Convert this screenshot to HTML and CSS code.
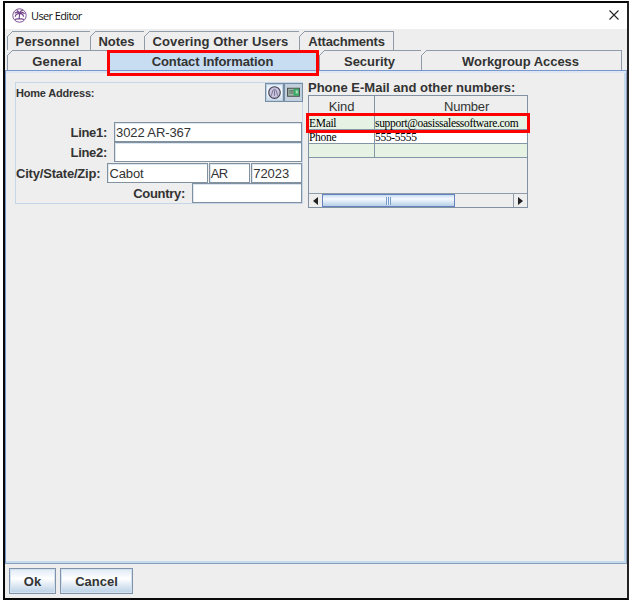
FILE: index.html
```
<!DOCTYPE html>
<html lang="en">
<head>
<meta charset="utf-8">
<title>User Editor</title>
<link rel="stylesheet" href="styles.css">
</head>
<body>
<main class="window">
  <header class="titlebar">
    <svg class="logo" width="15" height="15" viewBox="0 0 15 15" fill="none" stroke="#71418a">
      <circle cx="7.5" cy="7.5" r="6.7" stroke-width=".9"/>
      <path d="M7.6 5.8C5.5 3.2 3.8 4 2.8 5.4M7.6 5.8C5 5.2 3.5 6.7 3.3 8.6M7.6 5.8C6.6 3.8 6 2.7 4.8 2.3M7.6 5.8C8 3.5 9.2 2.4 10.8 2.8M7.6 5.8C10 3.8 11.8 4.5 12.5 6M7.6 5.8C10.5 5.5 11.4 7 11.5 8.8" stroke-width="1.2"/>
      <path d="M7.6 6L7.1 11.5M3 11.5Q7.3 9.8 12 11.5" stroke-width="1.1"/>
    </svg>
    <h1 class="title">User Editor</h1>
    <svg class="close" width="10" height="10" viewBox="0 0 10 10" stroke="#222" stroke-width="1.1"><path d="M.5 .5L9.5 9.5M9.5 .5L.5 9.5"/></svg>
  </header>
  <nav class="tabs">
    <div class="tab-row">
      <div class="tab personnel"><span>Personnel</span></div>
      <div class="tab notes"><span>Notes</span></div>
      <div class="tab covering"><span>Covering Other Users</span></div>
      <div class="tab attachments"><span>Attachments</span></div>
    </div>
    <div class="tab-row">
      <div class="tab general"><span>General</span></div>
      <div class="tab contact"><span>Contact Information</span><i class="mark tab-mark"></i></div>
      <div class="tab security"><span>Security</span></div>
      <div class="tab workgroup"><span>Workgroup Access</span></div>
    </div>
  </nav>
  <section class="panel">
    <div class="address">
      <div class="address-head">
        <span class="address-title">Home Address:</span>
        <div class="tools">
          <div class="tool"><svg width="15" height="15" viewBox="0 0 14 14"><circle cx="7" cy="7" r="5.4" fill="#c8c3df" stroke="#454554" stroke-width="1.1"/><path d="M4 10L5.5 5Q7 3 8.5 5L10 10M7 5V10" fill="none" stroke="#77718e" stroke-width=".9"/></svg></div>
          <div class="tool dim"><svg width="15" height="15" viewBox="0 0 14 14"><path d="M1.5 3H12.5V10.5H1.5Z" fill="#a3b9a9" stroke="#454c4a"/><path d="M7 3.5H12V10H7Z" fill="#35a864"/><path d="M3 5.5H7M3 7.5H7" stroke="#53665d"/><path d="M9 5H11V8H9Z" fill="#a9dfb9"/></svg></div>
        </div>
      </div>
      <div class="field-row"><label><span class="l-line">Line1:</span></label><div class="input line">3022 AR-367</div></div>
      <div class="field-row"><label><span class="l-line">Line2:</span></label><div class="input line"></div></div>
      <div class="field-row"><label><span class="l-city">City/State/Zip:</span></label><div class="input city">Cabot</div><div class="input state">AR</div><div class="input zip">72023</div></div>
      <div class="field-row"><label><span class="l-line">Country:</span></label><div class="input country"></div></div>
    </div>
    <div class="numbers">
      <h2><span>Phone E-Mail and other numbers:</span></h2>
      <div class="table">
        <div class="row head"><div>Kind</div><div>Number</div></div>
        <div class="row tint"><div>EMail</div><div>support@oasissalessoftware.com</div></div>
        <div class="row white"><div>Phone</div><div>555-5555</div></div>
        <div class="row tint"><div></div><div></div></div>
        <div class="blank"></div>
        <div class="scroll">
          <div class="arrow"><svg width="5" height="8" viewBox="0 0 5 8"><path d="M5 0V8L0 4Z" fill="#222"/></svg></div>
          <div class="thumb"><i></i></div>
          <div class="track"></div>
          <div class="arrow right"><svg width="5" height="8" viewBox="0 0 5 8"><path d="M0 0V8L5 4Z" fill="#222"/></svg></div>
        </div>
        <i class="mark row-mark"></i>
      </div>
    </div>
  </section>
  <footer class="actions"><div class="button ok">Ok</div><div class="button cancel">Cancel</div></footer>
</main>
</body>
</html>
```
FILE: styles.css
```
* { box-sizing: border-box; }
body { margin: 0; padding: 1px 0 0 3px; background: #fff; font-family: "Liberation Sans", Arial, sans-serif; color: #333; overflow: hidden; }
.window { width: 626px; height: 599px; border: 2px solid #080808; border-right-color: #222; background: #eee; display: flex; flex-direction: column; }
.titlebar { height: 26px; background: #fff; display: flex; align-items: center; padding: 0 8px 0 7px; }
.logo { margin-top: -1px; }
.title { flex: 1; margin: -1px 0 0 4px; font: 11px "Open Sans", sans-serif; letter-spacing: -.62px; color: #111; }
.close { margin-top: -2px; }
.tabs { padding: 2px 0 0 2px; height: 41px; }
.tab-row { display: flex; height: 19px; }
.tab-row + .tab-row { height: 20px; }
.tab { position: relative; height: 100%; background: #eee; border: solid #8f9ba7; border-width: 1px 0 0 1px; display: flex; align-items: center; justify-content: center; font-size: 13px; font-weight: bold; line-height: 16px; white-space: nowrap; }
.tab span { padding-top: 2px; }
.tab::before { content: ""; position: absolute; left: -1px; top: -1px; width: 6px; height: 6px; background: linear-gradient(135deg, #eee 44%, #8f9ba7 45% 56%, transparent 57%); }
.personnel { width: 83px; padding-right: 3px; letter-spacing: .1px; }
.notes { width: 54px; padding-right: 2px; }
.covering { width: 155px; padding-right: 3px; letter-spacing: .07px; }
.attachments { width: 95px; border-right-width: 1px; letter-spacing: -.2px; }
.general { width: 101px; letter-spacing: .15px; padding-right: 2px; }
.contact { width: 211px; background: #c8ddf2; border-color: #c8ddf2; z-index: 2; letter-spacing: -.1px; padding-right: 3px; }
.contact::before { display: none; }
.security { width: 102px; letter-spacing: -.05px; padding-right: 2px; }
.workgroup { width: 201px; border-right-width: 1px; letter-spacing: -.05px; padding-right: 2px; }
.mark { position: absolute; border: 3px solid #f00; z-index: 3; }
.tab-mark { left: -2px; top: -1px; width: 212px; height: 26px; }
.panel { height: 494px; border: 1px solid #7897cf; border-bottom-color: #8b9fb8; border-right-color: #8ea3bd; box-shadow: inset 0 2px #dce7f3, inset -2px -2px #c4daef; padding: 11px 0 0 9px; display: flex; align-items: flex-start; gap: 5px; }
.address { width: 288px; height: 122px; border: 1px solid #c5d6e8; }
.address-head { height: 39px; display: flex; justify-content: space-between; margin-right: -1px; }
.address-title { font-size: 11px; line-height: 20px; font-weight: bold; letter-spacing: -.2px; }
.tools { display: flex; height: 19px; }
.tool { width: 19px; height: 19px; border: 1px solid #7a8da0; background: linear-gradient(#dce9f5, #fff 50%, #c2d6e9); box-shadow: inset 0 0 0 1px #b8cfe4; padding: 1px; }
.tool svg { display: block; }
.dim { background: #c5d0db; }
.field-row { display: flex; justify-content: flex-end; height: 20.3px; gap: 1px; }
label { flex: 1; text-align: right; font-size: 13px; font-weight: bold; line-height: 21px; white-space: nowrap; margin-right: 6px; }
.input { height: 20px; background: #fff; border: 1px solid #8291a0; box-shadow: inset 1px 1px #dbe6f0; padding-left: 1px; font-size: 13px; line-height: 19px; letter-spacing: -.1px; white-space: nowrap; }
.line { width: 188px; }
.city { width: 101px; }
.state { width: 42px; letter-spacing: -.5px; }
.zip { width: 51px; }
.country { width: 110px; }
.l-line { letter-spacing: -.3px; }
.l-city { letter-spacing: -.2px; }
.numbers { width: 220px; }
h2 { font-size: 13px; line-height: 15px; height: 14px; white-space: nowrap; margin: -2px 0 1px; }
.table { position: relative; width: 220px; height: 113px; border: 1px solid #8191a1; }
.row { display: grid; grid-template-columns: 65px 153px; height: 14px; border-bottom: 1px solid #8296a5; font: 11.5px/14px "Liberation Serif", serif; letter-spacing: -.3px; color: #000; }
.row div { white-space: nowrap; }
.row div + div { border-left: 1px solid #8296a5; }
.row div:last-child { letter-spacing: -.31px; }
.head { height: 20px; font: 13px/21px "Liberation Sans", sans-serif; color: #333; text-align: center; letter-spacing: -.1px; }
.row.head div + div { padding-left: 31px; letter-spacing: -.2px; }
.tint { background: #e6f2e4; }
.white { background: #fff; }
.blank { height: 36px; border-bottom: 1px solid #8f9ca9; }
.scroll { display: flex; height: 13px; background: #eee; }
.arrow { width: 13px; display: flex; align-items: center; justify-content: center; }
.arrow.right { border-left: 1px solid #8f9ca9; width: 14px; }
.thumb { width: 133px; border: 1px solid #6382bf; background: linear-gradient(#c7dcf0, #f5faff 35%, #b8cfe5); display: flex; align-items: center; justify-content: center; }
.thumb i { width: 5px; height: 8px; background: repeating-linear-gradient(90deg, #7b9cca 0 1px, #e5f0fc 1px 2px); }
.track { flex: 1; }
.row-mark { left: -3px; top: 17px; width: 224px; height: 20px; }
.actions { flex: 1; display: flex; gap: 4px; padding: 4px 4px; }
.button { height: 26px; border: 1px solid #7f94aa; box-shadow: inset 0 0 0 1px #d3e0ed; background: linear-gradient(#dfeaf5, #fff 40%, #b9d0e5); font-size: 13px; line-height: 25px; font-weight: bold; text-align: center; }
.ok { width: 47px; }
.cancel { width: 73px; }
```
